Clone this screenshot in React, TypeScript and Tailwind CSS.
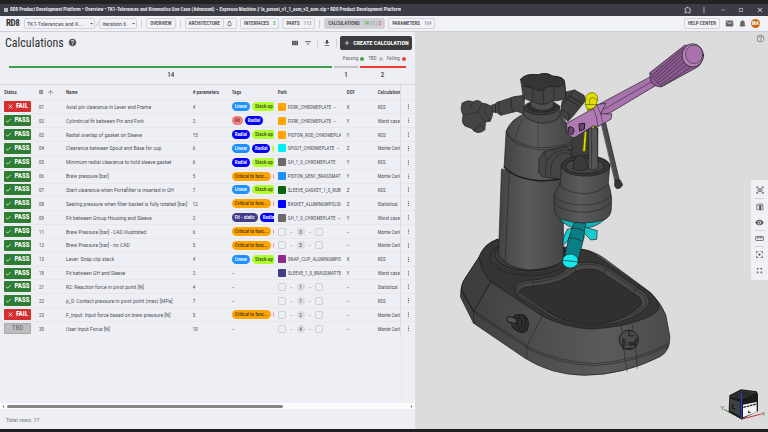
import React from 'react';
import {
  MdAdd,
  MdArrowDropDown,
  MdArrowLeft,
  MdArrowRight,
  MdArrowUpward,
  MdCheck,
  MdClose,
  MdCropSquare,
  MdEmail,
  MdFilterCenterFocus,
  MdFilterList,
  MdFullscreen,
  MdGetApp,
  MdHelp,
  MdHelpOutline,
  MdMoreVert,
  MdNotifications,
  MdOutlineExtension,
  MdOutlineNotifications,
  MdOutlineStraighten,
  MdRemove,
  MdViewColumn,
  MdVisibility,
} from 'react-icons/md';

type Status = 'PASS' | 'FAIL' | 'TBD';

interface Row {
  id: string;
  status: Status;
  name: string;
  params: number;
  tags: string[];
  path?: string;
  color?: string;
  count?: number;
  dof: string;
  type: string;
}

const rows: Row[] = [
  { id: '01', status: 'FAIL', name: 'Axial pin clearance in Lever and Frame', params: 4, tags: ['Linear', 'Stack-up'], path: 'FORK_CHROMEPLATE  –', color: 'bg-[#ffa500]', dof: 'X', type: 'RSS' },
  { id: '02', status: 'PASS', name: 'Cylindrical fit between Pin and Fork', params: 2, tags: ['Fit', 'Radial'], path: 'FORK_CHROMEPLATE  –', color: 'bg-[#ffa500]', dof: 'Y', type: 'Worst case' },
  { id: '03', status: 'PASS', name: 'Radial overlap of gasket on Sleeve', params: 15, tags: ['Radial', 'Stack-up'], path: 'PISTON_ROD_CHROMEPLATE', color: 'bg-[#ffa500]', dof: 'Y', type: 'RSS' },
  { id: '04', status: 'PASS', name: 'Clearance between Spout and Base for cup', params: 6, tags: ['Linear', 'Radial', 'Stack-up'], path: 'SPOUT_CHROMEPLATE  –', color: 'bg-[#00f0f0]', dof: 'Z', type: 'Monte Carlo' },
  { id: '05', status: 'PASS', name: 'Minimum radial clearance to hold sleeve gasket', params: 6, tags: ['Radial', 'Stack-up'], path: 'GH_1_0_CHROMEPLATE', color: 'bg-[#696969]', dof: 'Y', type: 'RSS' },
  { id: '06', status: 'PASS', name: 'Brew pressure [bar]', params: 5, tags: ['Critical to func...', 'Fit'], path: 'PISTON_GEN1_BRASSMATTE', color: 'bg-[#1e90ff]', dof: 'Y', type: 'Monte Carlo' },
  { id: '07', status: 'PASS', name: 'Start clearance when Portafilter is inserted in GH', params: 7, tags: ['Linear', 'Stack-up'], path: 'SLEEVE_GASKET_1_0_RUBBER', color: 'bg-[#0a640a]', dof: 'Z', type: 'RSS' },
  { id: '08', status: 'PASS', name: 'Sealing pressure when filter basket is fully rotated [bar]', params: 12, tags: ['Critical to func...', 'Fit'], path: 'BASKET_ALUMINUMPOLISHED', color: 'bg-[#0000ff]', dof: 'Z', type: 'Statistical' },
  { id: '09', status: 'PASS', name: 'Fit between Group Housing and Sleeve', params: 2, tags: ['Fit - static', 'Radial'], path: 'GH_1_0_CHROMEPLATE  –', color: 'bg-[#696969]', dof: 'Y', type: 'Worst case' },
  { id: '11', status: 'PASS', name: 'Brew Pressure [bar] - CAD illustrated', params: 6, tags: ['Critical to func...', 'Fit'], count: 3, dof: '–', type: 'Monte Carlo' },
  { id: '12', status: 'PASS', name: 'Brew Pressure [bar] - no CAD', params: 5, tags: ['Critical to func...', 'Fit'], count: 3, dof: '–', type: 'Monte Carlo' },
  { id: '13', status: 'PASS', name: 'Lever: Snap clip stack', params: 4, tags: ['Linear', 'Stack-up'], path: 'SNAP_CLIP_ALUMINUMPOLISHED', color: 'bg-[#8b2a8b]', dof: 'X', type: 'RSS' },
  { id: '18', status: 'PASS', name: 'Fit between GH and Sleeve', params: 2, tags: [], path: 'SLEEVE_1_0_BRASSMATTE', color: 'bg-[#423b88]', dof: 'Y', type: 'Worst case' },
  { id: '21', status: 'PASS', name: 'R2: Reaction force in pivot point [N]', params: 4, tags: [], count: 1, dof: '–', type: 'Statistical' },
  { id: '22', status: 'PASS', name: 'p_0: Contact pressure in pivot point (max) [MPa]', params: 7, tags: [], count: 1, dof: '–', type: 'RSS' },
  { id: '23', status: 'FAIL', name: 'F_input: Input force based on brew pressure [N]', params: 5, tags: ['Critical to func...', 'Fit'], count: 2, dof: '–', type: 'Monte Carlo' },
  { id: '30', status: 'TBD', name: 'User Input Force [N]', params: 10, tags: [], count: 4, dof: '–', type: 'Monte Carlo' },
];

const tagStyles: Record<string, string> = {
  Linear: 'bg-[#1e90ff] text-white',
  'Stack-up': 'bg-[#adff2f] text-[#3c4a20]',
  Radial: 'bg-[#0000ff] text-white',
  Fit: 'bg-[#f08080] text-[#6b2020]',
  'Critical to func...': 'bg-[#ffa500] text-[#4a3410]',
  'Fit - static': 'bg-[#423b88] text-white',
};

const statusStyles: Record<Status, string> = {
  PASS: 'bg-[#2e7d32] text-white',
  FAIL: 'bg-[#d32f2f] text-white',
  TBD: 'bg-[#bdbdbd] text-[#6a6a6a] border border-[#a8a8a8]',
};

function TitleBar() {
  return (
    <div className="bg-[#3b3c44] border-t-4 border-[#222222] text-[#e4e4e8]">
      <div className="flex h-3 items-center px-1">
        <span className="mr-[2px] flex h-1 w-1 bg-[#b8b8c0]" />
        <span className="truncate text-[5px] font-bold">
          RD8 Product Development Platform • Overview • TK1-Tolerances and Kinematics Use Case (Advanced) – Espresso Machine // la_pavoni_v1_1_asm_v3_asm.stp • RD8 Product Development Platform
        </span>
        <div className="ml-auto flex items-center">
          <button aria-label="Extensions" className="mr-2"><MdOutlineExtension className="h-2 w-2" /></button>
          <button aria-label="Browser menu" className="mr-3"><MdMoreVert className="h-2 w-2" /></button>
          <button aria-label="Minimize" className="mr-3"><MdRemove className="h-1.5 w-1.5" /></button>
          <button aria-label="Maximize" className="mr-3"><MdCropSquare className="h-1.5 w-1.5" /></button>
          <button aria-label="Close"><MdClose className="h-2 w-2" /></button>
        </div>
      </div>
    </div>
  );
}

function Picker({ label, value, className }: { label: string; value: string; className: string }) {
  return (
    <div className={`relative flex items-center ${className}`}>
      <select
        aria-label={label}
        className="h-[11px] w-full appearance-none rounded-xs border border-[#d3d3d9] bg-transparent pl-[2px] pr-[5px] text-[6px] leading-[9px] text-[#4a4a4e]"
      >
        <option>{value}</option>
      </select>
      <MdArrowDropDown className="pointer-events-none absolute right-0 h-[7px] w-[7px] text-[#555]" />
    </div>
  );
}

function Divider() {
  return <span className="h-2 w-px bg-[#cfcfd6]" />;
}

const navButton = 'flex h-[11px] items-center gap-1 rounded-xs border border-[#d3d3d9] px-[3px] text-[5px] font-medium whitespace-nowrap text-[#3c3c40]';

function Toolbar() {
  return (
    <header className="flex h-4 items-center border-b border-[#cdd0d8] bg-[#f1f1f8] px-[6px]">
      <span className="w-[18px] text-[9px] font-bold leading-none tracking-tighter text-[#333]">RD8</span>
      <Picker label="Project" value="TK1-Tolerances and K..." className="w-[71px]" />
      <span className="px-[1px] text-[6px] text-[#999]">/</span>
      <Picker label="Iteration" value="Iteration 6" className="w-[38px]" />
      <nav className="ml-1 flex items-center gap-1">
        <Divider />
        <button className={navButton}>OVERVIEW</button>
        <Divider />
        <div className="flex gap-[3px]">
          <div className="flex">
            <button className={`${navButton} rounded-r-none`}>ARCHITECTURE</button>
            <button aria-label="Architecture alerts" className="-ml-px flex h-[11px] w-[14px] items-center justify-center rounded-r-xs border border-[#d3d3d9]">
              <MdOutlineNotifications className="h-[7px] w-[7px] text-[#555]" />
            </button>
          </div>
          <button className={navButton}>INTERFACES <span className="text-[#4caf50]">5</span></button>
          <button className={navButton}>PARTS <span className="text-[#9a9aa0]">113</span></button>
        </div>
        <Divider />
        <div className="flex gap-[3px]">
          <button className={`${navButton} border-[#9c9ca2] bg-[#cfcfd5]`}>
            CALCULATIONS
            <span className="flex gap-px text-[#8a8a90]"><span className="text-[#4caf50]">14</span><span>/</span><span>1</span><span>/</span><span className="text-[#f44336]">2</span></span>
          </button>
          <button className={navButton}>PARAMETERS <span className="text-[#9a9aa0]">164</span></button>
        </div>
      </nav>
      <div className="ml-auto flex items-center">
        <button className={navButton}>HELP CENTER</button>
        <button aria-label="Messages" className="ml-[5px] text-[#666]"><MdEmail className="h-[9px] w-[9px]" /></button>
        <button aria-label="Notifications" className="ml-1 text-[#666]"><MdNotifications className="h-[9px] w-[9px]" /></button>
        <button aria-label="Account" className="ml-1 mr-[2px] flex h-[9px] w-[9px] items-center justify-center rounded-full bg-[#c96a10] text-[5px] font-bold text-white">MA</button>
      </div>
    </header>
  );
}

function StatusBadge({ status }: { status: Status }) {
  return (
    <span className={`flex h-[11px] w-[27px] items-center justify-center gap-[2px] rounded-[1px] text-[7px] leading-none ${statusStyles[status]} ${status === 'TBD' ? '' : 'font-bold'}`}>
      {status === 'PASS' && <MdCheck className="h-[7px] w-[7px]" />}
      {status === 'FAIL' && <MdClose className="h-[7px] w-[7px]" />}
      {status}
    </span>
  );
}

function PathCell({ row }: { row: Row }) {
  if (row.path) {
    return (
      <div className="flex items-center gap-[2px] overflow-hidden whitespace-pre">
        <span className={`h-2 w-2 shrink-0 rounded-[1px] ${row.color}`} />
        {row.path}
      </div>
    );
  }
  return (
    <div className="flex items-center gap-1 text-[#888]">
      <span className="h-2 w-2 rounded-xs border border-[#d0d0d4]" />
      –
      <span className="flex h-2 w-2 items-center justify-center rounded-full bg-[#dcdcdf] text-[#444]">{row.count}</span>
      –
      <span className="h-2 w-2 rounded-xs border border-[#d0d0d4]" />
    </div>
  );
}

function Summary() {
  return (
    <div className="border-b border-[#d6d6dc] px-[9px] pb-[2px]">
      <div className="mb-[1px] flex h-3 items-center justify-end gap-1 text-[5px] text-[#666]">
        <span className="flex items-center gap-[2px]">Passing <i className="h-1 w-1 rounded-full bg-[#43a047]" /></span>
        <span className="flex items-center gap-[2px]">TBD <i className="h-1 w-1 rounded-full bg-[#bdbdbd]" /></span>
        <span className="flex items-center gap-[2px]">Failing <i className="h-1 w-1 rounded-full bg-[#f44336]" /></span>
      </div>
      <div className="flex gap-[2px] text-center text-[7px] font-medium leading-[14px] text-[#444]">
        <div className="flex-[14] border-t-2 border-[#43a047]">14</div>
        <div className="flex-1 border-t-2 border-[#c4c4c8]">1</div>
        <div className="flex-[2] border-t-2 border-[#ef3b36]">2</div>
      </div>
    </div>
  );
}

function CalculationsTable() {
  return (
    <div className="flex grow flex-col">
      <table className="h-[250px] w-full table-fixed text-left text-[5px] leading-[8px] text-[#505055]">
        <colgroup>
          <col className="w-[35px]" />
          <col className="w-[27px]" />
          <col />
          <col className="w-[39px]" />
          <col className="w-[46px]" />
          <col className="w-[69px]" />
          <col className="w-[31px]" />
          <col className="w-[27px]" />
          <col className="w-[14px]" />
        </colgroup>
        <thead>
          <tr className="h-[15px] whitespace-nowrap text-[#38383c] [&>th]:pl-1 [&>th]:font-medium">
            <th>Status</th>
            <th><span className="flex items-center gap-1">ID <MdArrowUpward className="h-[7px] w-[7px] text-[#777]" /></span></th>
            <th>Name</th>
            <th># parameters</th>
            <th>Tags</th>
            <th>Path</th>
            <th>DOF</th>
            <th className="overflow-hidden">Calculation type</th>
            <th className="border-l border-[#d9d9de]" aria-label="Actions" />
          </tr>
        </thead>
        <tbody>
          {rows.map((row) => (
            <tr key={row.id} className="border-t border-[#e8e7ec] [&>td]:pl-1">
              <td><StatusBadge status={row.status} /></td>
              <td>{row.id}</td>
              <td className="truncate font-[Roboto,sans-serif]">{row.name}</td>
              <td>{row.params}</td>
              <td>
                <div className="flex gap-[2px] overflow-hidden">
                  {row.tags.map((tag) => (
                    <span key={tag} className={`h-[9px] shrink-0 rounded-full px-[3px] leading-[9px] font-medium ${tagStyles[tag]}`}>{tag}</span>
                  ))}
                  {row.tags.length === 0 && '–'}
                </div>
              </td>
              <td className="pr-[2px]"><PathCell row={row} /></td>
              <td>{row.dof}</td>
              <td className="overflow-hidden whitespace-nowrap">{row.type}</td>
              <td className="border-l border-[#d9d9de]">
                <button aria-label={`Actions for ${row.id}`} className="flex"><MdMoreVert className="h-[7px] w-[7px]" /></button>
              </td>
            </tr>
          ))}
        </tbody>
      </table>
      <div className="flex grow justify-end">
        <div className="w-[14px] border-l border-[#ebe4e4]" />
      </div>
    </div>
  );
}

function CalculationsPanel() {
  return (
    <section className="flex w-[54%] shrink-0 flex-col bg-[#eeeff5]">
      <div className="flex h-[21px] items-center pl-[5px] pr-[3px]">
        <h1 className="text-[12px] leading-none text-[#333]">Calculations</h1>
        <MdHelp className="ml-1 h-[9px] w-[9px] text-[#555]" />
        <div className="ml-auto flex items-center gap-[5px] text-[#555]">
          <button aria-label="Columns"><MdViewColumn className="h-2 w-2" /></button>
          <button aria-label="Filter"><MdFilterList className="h-2 w-2" /></button>
          <Divider />
          <button aria-label="Download"><MdGetApp className="h-2 w-2" /></button>
          <Divider />
          <button className="-ml-[2px] flex h-[14px] items-center gap-[2px] rounded-xs bg-[#3b3b3d] px-[3px] text-[6px] font-bold whitespace-nowrap text-white">
            <MdAdd className="h-2 w-2" />
            CREATE CALCULATION
          </button>
        </div>
      </div>
      <Summary />
      <CalculationsTable />
      <div className="flex h-[6px] items-center bg-[#fbfbfb] text-[#666]">
        <MdArrowLeft className="h-[7px] w-[7px]" />
        <div className="grow"><div className="h-[3px] w-[69%] rounded-full bg-[#878787]" /></div>
        <MdArrowRight className="h-[7px] w-[7px]" />
      </div>
      <footer className="flex h-5 items-center pl-[6px] text-[6px] text-[#77777c]">Total rows: 17</footer>
    </section>
  );
}

function EspressoMachine() {
  return (
    <svg viewBox="414 32 354 397" className="block h-full w-full" role="img" aria-label="Espresso machine assembly">
      <defs>
        <linearGradient id="steel" x1="0" x2="1">
          <stop offset="0" stopColor="#434344" />
          <stop offset="0.45" stopColor="#5b5a5c" />
          <stop offset="1" stopColor="#454546" />
        </linearGradient>
        <linearGradient id="side" x1="0" x2="1">
          <stop offset="0" stopColor="#3e3e3f" />
          <stop offset="0.35" stopColor="#4d4d4e" />
          <stop offset="0.7" stopColor="#5a595b" />
          <stop offset="1" stopColor="#4a4a4b" />
        </linearGradient>
      </defs>

      {/* base, column and portafilter */}
      <g transform="translate(450 190) scale(0.33333)" stroke="#1c1c1c" strokeWidth="2" strokeLinejoin="round" strokeLinecap="round" fill="none">
        <path fill="url(#side)" d="M138 148Q98 162 84 203L45 262Q28 282 29 322L68 400L222 505Q300 555 400 557Q520 556 630 500Q660 482 658 440L646 375Q632 340 600 308L465 208Q430 182 395 178Z" />
        <path fill="#343435" d="M138 149Q98 163 84 203Q94 250 120 276L270 376Q335 412 420 418Q525 412 590 383Q630 365 626 345Q615 320 590 302L450 205Q420 182 392 178L138 149Z" />
        <path fill="#3e3e3f" d="M84 203Q94 250 120 276L68 365L32 300Q30 285 45 262Z" />
        <path d="M32 300L68 362L240 475Q330 517 430 522Q560 512 654 462M120 276L68 365V400M275 378L228 470V505M512 410L524 512L530 545M545 404L558 498L560 536" strokeWidth="1.5" />
        <path d="M32 306L68 368L240 481Q330 523 430 528Q560 518 655 468" strokeWidth="1.5" />
        <ellipse cx="236" cy="202" rx="120" ry="54" fill="#3a3a3b" />
        <ellipse cx="236" cy="198" rx="114" ry="52" strokeWidth="1.5" />
        <ellipse cx="238" cy="194" rx="106" ry="49" strokeWidth="3" />
        <path fill="#474748" d="M193 305Q188 280 225 272Q300 268 335 248Q362 218 405 217Q450 216 480 238L575 303Q605 325 592 348Q560 390 450 409Q365 410 310 385L205 322Z" />
        <path d="M199 305Q196 283 230 278Q305 275 342 252Q370 225 407 223Q448 222 475 243L568 308Q595 325 585 345Q552 383 450 402Q365 403 315 380L210 320Z" strokeWidth="1.5" />
        <path fill="#303031" d="M206 308Q202 293 240 290Q318 283 352 260Q377 238 405 238Q440 234 465 255L560 318Q580 333 570 347Q540 380 450 405Q365 405 318 381Z" />
        <path d="M248 270V290M368 228L376 245M473 229L458 250M562 293L549 310" strokeWidth="1.5" />
        <path fill="url(#steel)" d="M152 -62L143 195Q170 236 235 240Q310 236 338 212V-62Z" />
        <path d="M176 -62L163 214" strokeWidth="1.5" />

        {/* power switch */}
        <g strokeWidth="3" fill="#303031">
          <ellipse cx="215" cy="402" rx="18" ry="27" />
          <ellipse cx="207" cy="400" rx="18" ry="26" />
          <ellipse cx="198" cy="398" rx="16" ry="23" />
          <rect x="169" y="383" width="34" height="16" rx="7" fill="#555557" transform="rotate(14 185 390)" />
          <path d="M190 380L206 416M206 380L190 416M222 384L232 395M218 412L230 422" />
        </g>
        {/* maker badge */}
        <circle cx="535" cy="450" r="29" fill="#4a4a4b" strokeWidth="3" />
        <path d="M535 423V438H548M517 447V470M517 448Q530 449 520 458Q534 463 517 469M533 460Q540 452 541 463Q536 473 533 460M544 469V457L551 468V456M556 445V470M550 458L562 448M515 477H545" strokeWidth="3" />

        {/* portafilter */}
        <path fill="#10b8bc" d="M323 82Q350 118 392 116Q440 112 462 88L440 70H340Z" />
        <path fill="#16ccd0" d="M350 118Q336 138 336 164Q350 160 357 140L366 116ZM412 114L440 122L438 148L420 150L400 128L400 145L390 140L396 108Z" />
        <path fill="#087f84" d="M370 100Q386 90 405 102L398 150L382 212L340 204L354 146Z" />
        <path d="M362 116Q380 110 401 124M355 145Q372 140 394 154" />
        <ellipse cx="359" cy="213" rx="24" ry="21" fill="#16e8ec" />
        <path d="M336 211L383 216" />
      </g>

      {/* boiler, group and lever */}
      <g transform="translate(450 35) scale(0.33333)" stroke="#1c1c1c" strokeWidth="2" strokeLinejoin="round" strokeLinecap="round" fill="none">
        <path fill="#454546" d="M122 210L134 206Q136 200 146 199L190 184L222 180L218 236L198 228L150 240L138 232L122 230Z" />
        <path d="M146 199Q138 216 150 240M182 188Q176 206 186 230M134 206V232" />
        <path fill="#444445" d="M34 204Q50 192 66 200Q84 190 94 204Q104 203 120 212Q132 232 118 258L104 260L102 284Q84 298 70 288L62 280L42 272Q30 262 37 240Q26 222 34 204Z" />
        <path d="M94 204L80 230L104 260M80 230L37 240M66 200L56 222M102 284L86 266L70 288M108 208L100 230L118 258" strokeWidth="1.5" />

        <path fill="#414142" d="M345 170L372 164L400 180L405 196L366 244L352 258L328 240L334 200Z" />
        <path d="M372 164L330 215M345 188L386 214M352 180L394 204M326 232Q330 218 346 230Q362 240 352 258" />

        <path fill="url(#steel)" d="M220 236Q180 252 166 288L160 395Q190 430 265 437L325 434L362 350L364 310Q358 262 326 240Z" />
        <path d="M166 288Q180 326 262 338Q320 338 362 322M168 296Q184 332 262 344Q320 344 362 328" strokeWidth="1.5" />
        <path d="M214 252L188 318M262 260V338M328 244L352 300" strokeWidth="1" />
        <path d="M160 395Q190 432 265 437Q300 438 325 432" strokeWidth="4" />

        <path fill="#4a4a4b" d="M220 214L218 240Q240 262 275 264Q320 262 328 240L326 212Z" />
        <ellipse cx="273" cy="217" rx="53" ry="22" fill="#3a3a3b" />
        <ellipse cx="273" cy="215" rx="43" ry="16" fill="#303031" />
        <path fill="#4f4f50" d="M240 185V212Q272 238 308 216V180Z" />
        <path fill="#434344" d="M210 132Q222 114 262 118Q290 110 304 122Q340 124 342 140L346 184Q330 200 304 196Q290 210 262 206L238 196Q214 192 216 178Z" />
        <path fill="#353536" d="M210 132Q222 114 262 118Q290 110 304 122Q340 124 342 140Q336 156 310 154Q290 150 278 164Q258 170 246 156Q214 158 210 132Z" />
        <path d="M216 152Q230 152 246 160V196M278 164V206M310 154V196M342 146L346 184" strokeWidth="1.5" />

        <path fill="#3c3c3d" d="M366 304L360 392Q395 412 440 398L442 280L410 262L384 280Z" />
        <path fill="#454546" d="M266 370L280 350L346 334L362 350V390L332 432L274 424L264 412Z" />
        <path d="M280 350L288 372L284 418M292 374Q304 342 360 344M300 420Q296 382 320 360Q334 348 360 356" strokeWidth="1.5" />

        {/* thin steam wand */}
        <path fill="#4b4b4d" d="M452 262L465 262L506 434L494 438Z" />
        <path fill="#343435" d="M494 436L508 434L516 448Q512 462 498 460Q488 454 494 436Z" />

        {/* group housing */}
        <path fill="url(#steel)" d="M332 388L328 450Q308 470 310 498L312 528Q316 546 336 554Q400 574 462 554Q480 544 482 524L483 490Q480 462 473 444L478 388Z" />
        <ellipse cx="405" cy="392" rx="73" ry="31" fill="#343435" />
        <ellipse cx="403" cy="393" rx="58" ry="22" fill="#454546" />
        <path fill="#3a3a3b" d="M366 400Q368 358 392 360Q410 372 412 402Q390 412 366 400Z" />
        <path fill="#555556" d="M414 278L440 278L442 400Q424 410 414 398Z" />
        <path d="M423 280V400" strokeWidth="1.5" />
        <path d="M328 450Q340 472 400 476Q450 474 473 446M310 484Q330 508 400 510Q460 508 483 482M310 503Q330 530 400 532Q460 528 482 502" strokeWidth="1.5" />

        {/* yellow fork pin */}
        <path fill="#dfe000" stroke="#5c5c00" d="M407 182Q414 170 426 172Q442 176 441 192L434 222H410L404 208ZM412 222L434 222L430 280L420 276ZM402 288H408L404 348H397Z" />
        <path stroke="#5c5c00" d="M416 208L418 190Q430 182 440 196M406 208H438" />

        {/* lever */}
        <path fill="#a873ac" d="M447 206L600 124L620 148L480 232L456 240Z" />
        <path d="M460 222L606 138" strokeWidth="1.5" />
        <path fill="#b07bb5" d="M348 264L428 220L440 208L466 204L450 236L484 236L481 252L442 274L428 272L372 307Q354 308 350 290Z" />
        <path d="M428 220Q440 244 442 274M440 210Q452 236 456 262" strokeWidth="1.5" />
        <path fill="#6d4672" d="M355 276Q366 272 370 284Q370 298 359 299Q350 292 355 276ZM386 266L402 264L401 282L388 287Z" strokeWidth="3" />
        <path fill="#8c5991" d="M598 112L702 30Q748 22 760 60Q754 90 738 97L632 155Q610 154 602 140Z" />
        <path d="M612 124L698 48M607 118L700 38M617 130L698 58M622 136L700 68M627 142L704 78M634 147L712 86M640 151L722 94M600 114Q614 140 634 152" strokeWidth="1.5" />
        <ellipse cx="727" cy="60" rx="32" ry="35" fill="#b27fb7" />
        <ellipse cx="731" cy="57" rx="26" ry="28" fill="#a873ac" strokeWidth="1.5" />
      </g>
    </svg>
  );
}

function ViewCube() {
  return (
    <svg viewBox="0 0 144 108" className="h-9 w-12" role="img" aria-label="View cube">
      <path d="M63 92L12 64" stroke="#2f8f3a" strokeWidth="3" />
      <path d="M63 94L124 78" stroke="#b33" strokeWidth="3" />
      <path d="M28 22L63 4L110 10L114 18V70L64 94L26 72Z" fill="#1c1c1e" />
      <path d="M32 26L66 9L106 14L68 30Z" fill="#29292c" stroke="#444" strokeWidth="2" />
      <path d="M30 32L60 42V84L30 68Z" fill="#404043" />
      <path d="M69 50L110 42V72L69 88Z" fill="#f3f3f3" />
      <path d="M70 58L110 48" stroke="#222" strokeWidth="4" strokeDasharray="8 2" />
      <path d="M64 16V92" stroke="#2a3fbe" strokeWidth="4" />
      <path d="M38 48V62H46M86 68V74H92" stroke="#111" strokeWidth="3" fill="none" />
      <path d="M2 54L7 60L12 54M7 60V66M126 72L134 82M134 72L126 82" stroke="#555" strokeWidth="2" fill="none" />
    </svg>
  );
}

const toolButton = 'flex h-4 w-[9px] items-center justify-center';

function ViewerTools() {
  return (
    <div className="absolute right-0 top-[148px] flex w-[17px] flex-col items-center rounded-l-xs bg-[#f0f0f5] py-[2px] text-[#55555a]">
      <button aria-label="Isolate part" className={toolButton}>
        <svg viewBox="0 0 24 24" className="h-2 w-2" fill="none" stroke="currentColor" strokeWidth="2">
          <path d="M2 7V2H7M17 2H22V7M22 17V22H17M7 22H2V17M12 6L18 9V15L12 18L6 15V9ZM6 9L12 12L18 9M12 12V18M3 3L7 7M21 3L17 7M3 21L7 17M21 21L17 17" />
        </svg>
      </button>
      <button aria-label="Section view" className={`${toolButton} border-t border-[#d2d2d6]`}>
        <svg viewBox="0 0 24 24" className="h-2 w-2" fill="none" stroke="currentColor" strokeWidth="2">
          <path d="M2 6H8M2 6V20H8M2 6L8 3H20V8" />
          <path d="M10 7H15V21H10Z" fill="currentColor" />
          <path d="M17 8H21V21H17" />
        </svg>
      </button>
      <button aria-label="Visibility" className={toolButton}><MdVisibility className="h-[9px] w-[9px]" /></button>
      <button aria-label="Measure" className={`${toolButton} border-t border-[#d2d2d6]`}><MdOutlineStraighten className="h-[9px] w-[9px]" /></button>
      <button aria-label="Focus" className={`${toolButton} border-t border-[#d2d2d6]`}><MdFilterCenterFocus className="h-[9px] w-[9px]" /></button>
      <button aria-label="Fullscreen" className={toolButton}><MdFullscreen className="h-[9px] w-[9px]" /></button>
    </div>
  );
}

export default function App() {
  return (
    <div className="flex min-h-screen flex-col bg-[#eeeff5] font-['Roboto_Condensed','Liberation_Sans_Narrow',Roboto,sans-serif]">
      <TitleBar />
      <Toolbar />
      <main className="flex grow">
        <CalculationsPanel />
        <section className="relative grow bg-[#dcdcdc]">
          <EspressoMachine />
          <button aria-label="Viewer help" className="absolute right-[3px] top-[2px] text-[#77777a]"><MdHelpOutline className="h-[9px] w-[9px]" /></button>
          <ViewerTools />
          <div className="absolute bottom-[5px] right-0"><ViewCube /></div>
        </section>
      </main>
      <div className="h-[3px] bg-[#1e1f21]" />
    </div>
  );
}
